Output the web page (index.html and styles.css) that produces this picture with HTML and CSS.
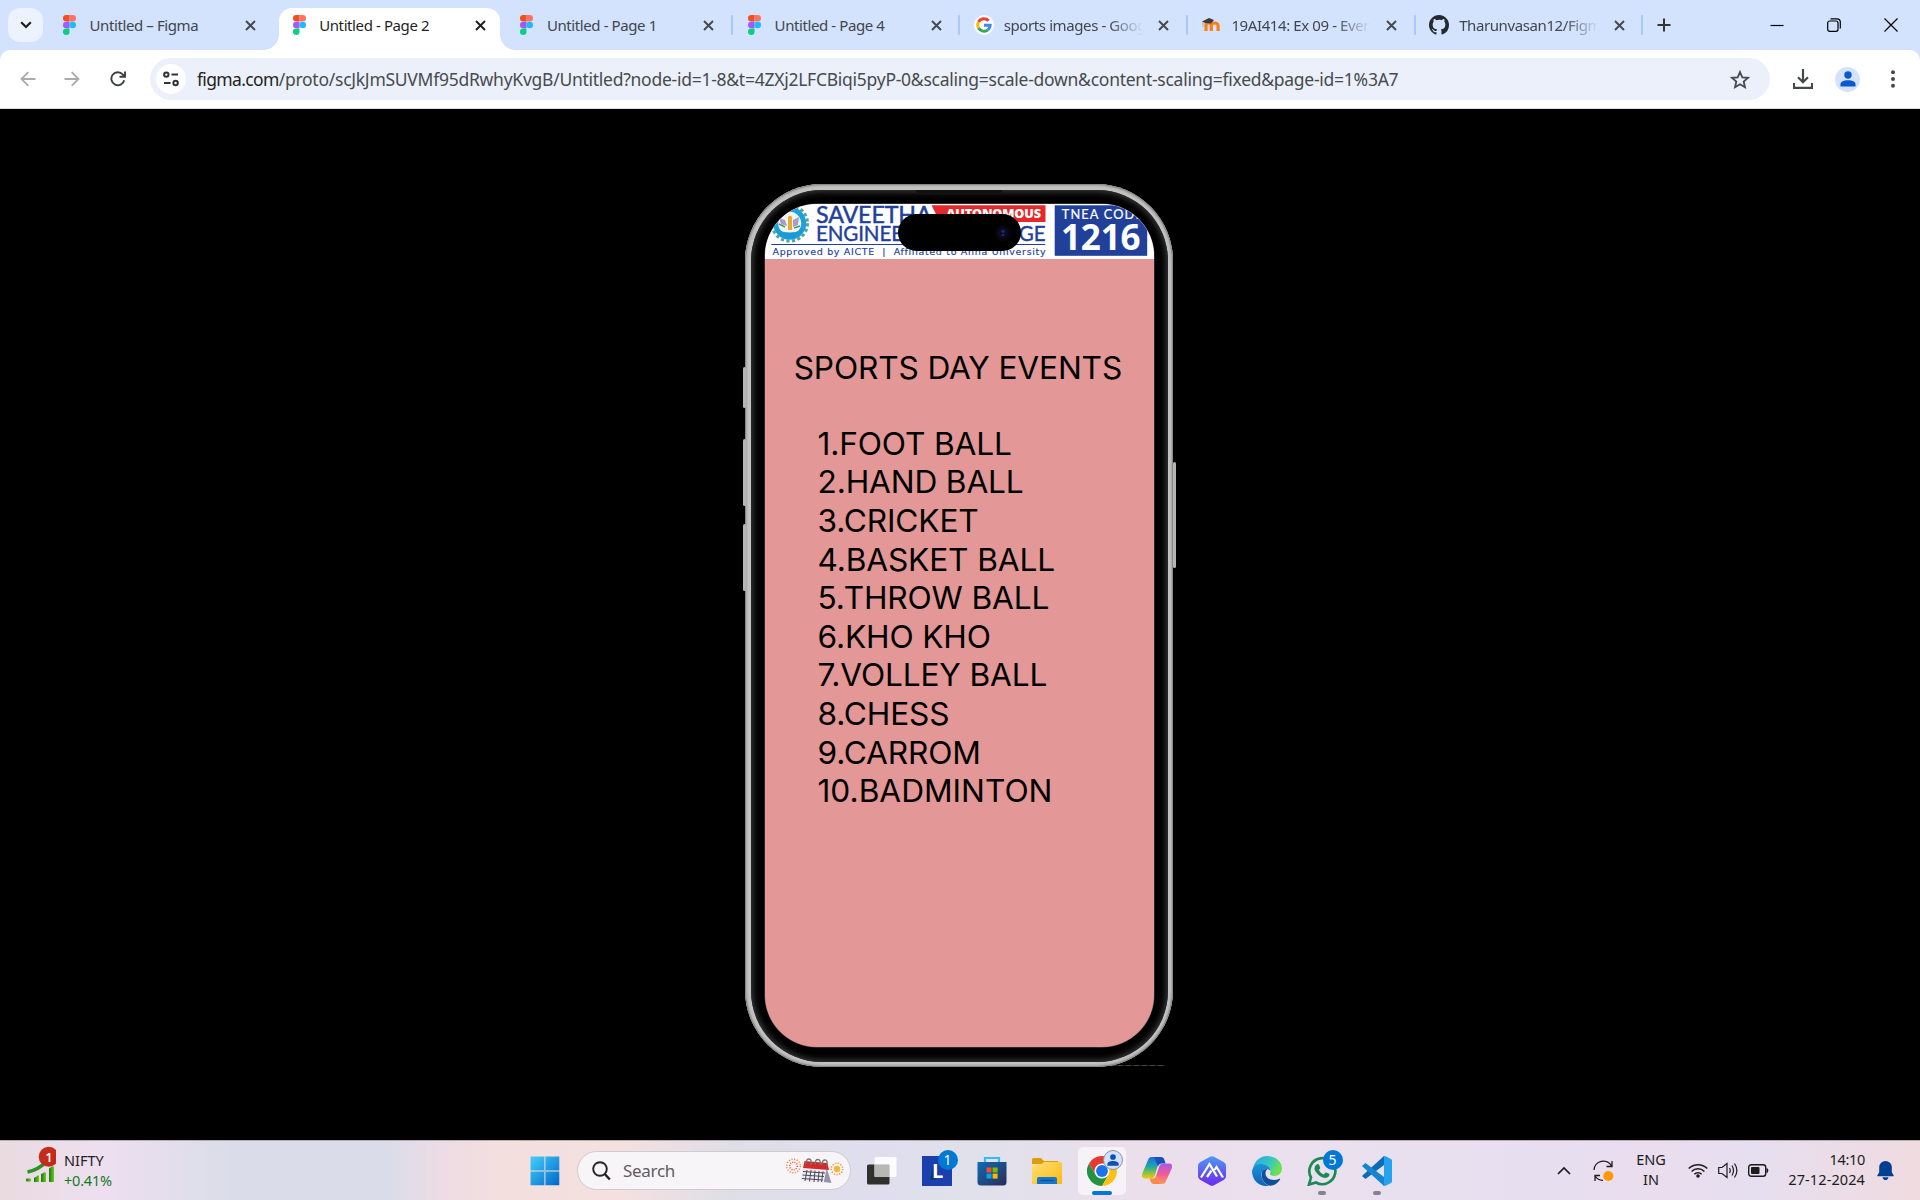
FILE: index.html
```html
<!DOCTYPE html>
<html lang="en">
<head>
<meta charset="utf-8">
<title>Untitled - Page 2</title>
<link rel="stylesheet" href="styles.css">
</head>
<body>
<svg width="0" height="0" class="defs">
  <defs>
    <symbol id="figma" viewBox="0 0 13 20"><path fill="#f24e1e" d="M6.5 0H3.3a3.3 3.3 0 0 0 0 6.6h3.2z"/><path fill="#ff7262" d="M6.5 0h3.2a3.3 3.3 0 0 1 0 6.6H6.5z"/><path fill="#a259ff" d="M6.5 6.7H3.3a3.3 3.3 0 0 0 0 6.6h3.2z"/><circle cx="9.7" cy="10" r="3.3" fill="#1abcfe"/><path fill="#0acf83" d="M6.5 13.4H3.3a3.3 3.3 0 1 0 3.2 3.3z"/></symbol>
    <symbol id="x" viewBox="0 0 11 11"><path d="M1 1l9 9M10 1l-9 9" stroke="currentColor" stroke-width="1.9" fill="none"/></symbol>
    <linearGradient id="win" x1="0" y1="0" x2="1" y2="1"><stop offset="0" stop-color="#46d0fb"/><stop offset="1" stop-color="#0067c8"/></linearGradient>
    <linearGradient id="fold" x1="0" y1="0" x2="1" y2="1"><stop offset="0" stop-color="#ffe079"/><stop offset="1" stop-color="#fbb90c"/></linearGradient>
    <linearGradient id="store" x1="0" y1="0" x2="1" y2="1"><stop offset="0" stop-color="#0f6cb8"/><stop offset="1" stop-color="#2a2c55"/></linearGradient>
    <linearGradient id="cpA" x1="0" y1="0" x2="0" y2="1"><stop offset="0" stop-color="#1672e0"/><stop offset=".45" stop-color="#22a6a6"/><stop offset=".75" stop-color="#8cc63c"/><stop offset="1" stop-color="#f2c813"/></linearGradient>
    <linearGradient id="cpB" x1="0" y1="0" x2="0" y2="1"><stop offset="0" stop-color="#a55bea"/><stop offset=".5" stop-color="#ee5a9c"/><stop offset="1" stop-color="#fb9a55"/></linearGradient>
    <linearGradient id="hex" x1="0" y1="0" x2="0" y2="1"><stop offset="0" stop-color="#4d9af0"/><stop offset="1" stop-color="#6d28f0"/></linearGradient>
    <linearGradient id="edgeA" x1="0" y1="0" x2="1" y2=".4"><stop offset="0" stop-color="#2aa4e6"/><stop offset=".6" stop-color="#35c6c4"/><stop offset="1" stop-color="#6fe04c"/></linearGradient>
    <linearGradient id="edgeB" x1="0" y1="0" x2="0" y2="1"><stop offset="0" stop-color="#1c93d8"/><stop offset="1" stop-color="#0c62b8"/></linearGradient>
    <linearGradient id="bars" x1="0" y1="0" x2="1" y2="0"><stop offset="0" stop-color="#117a1c"/><stop offset="1" stop-color="#74c916"/></linearGradient>
  </defs>
</svg>

<header class="tabstrip">
  <button class="tab-search"><svg width="12" height="8" viewBox="0 0 12 8"><path d="M1.2 1.2L6 6l4.800-4.800" fill="none" stroke="#1f1f1f" stroke-width="2.200"/></svg></button>
  <div class="tabs">
    <div class="tab first"><svg class="fav"><use href="#figma"/></svg><span class="title">Untitled – Figma</span><svg class="close"><use href="#x"/></svg></div>
    <div class="tab active"><svg class="fav"><use href="#figma"/></svg><span class="title">Untitled - Page 2</span><svg class="close"><use href="#x"/></svg></div>
    <div class="tab sep"><svg class="fav"><use href="#figma"/></svg><span class="title">Untitled - Page 1</span><svg class="close"><use href="#x"/></svg></div>
    <div class="tab sep"><svg class="fav"><use href="#figma"/></svg><span class="title">Untitled - Page 4</span><svg class="close"><use href="#x"/></svg></div>
    <div class="tab sep wide"><svg class="fav" viewBox="0 0 20 20"><circle cx="10" cy="10" r="10" fill="#fff"/><g fill="none" stroke-width="3"><path d="M14.600 5.800A6.300 6.300 0 0 0 4.500 7" stroke="#ea4335"/><path d="M4.500 7a6.300 6.300 0 0 0 0 6" stroke="#fbbc05"/><path d="M4.500 13a6.300 6.300 0 0 0 9.500 1.800" stroke="#34a853"/><path d="M14 14.800a6.300 6.300 0 0 0 2.200-4.600H10" stroke="#4285f4"/></g></svg><span class="title fade">sports images - Google</span><svg class="close"><use href="#x"/></svg></div>
    <div class="tab sep wide"><svg class="fav" viewBox="0 0 20 20"><path d="M5 16V10.500q0-2.500 2.600-2.500t2.700 2.500V16m0-5.500Q10.300 8 13.500 8t3.600 2.500V16" fill="none" stroke="#f98012" stroke-width="3.200"/><path d="M1 6.500L8 3l5 2-3 3.500-6-.5z" fill="#3b3b3b"/><path d="M2 7v5" stroke="#c8a48a"/></svg><span class="title fade">19AI414: Ex 09 - Event</span><svg class="close"><use href="#x"/></svg></div>
    <div class="tab sep wide"><svg class="fav" viewBox="0 0 16 16"><path fill="#24292f" d="M8 0C3.580 0 0 3.580 0 8c0 3.540 2.290 6.530 5.470 7.590.4.070.55-.17.55-.38 0-.19-.01-.82-.01-1.490-2.010.37-2.530-.49-2.690-.94-.09-.23-.48-.94-.82-1.130-.28-.15-.68-.52-.01-.53.63-.01 1.080.58 1.230.82.72 1.210 1.870.87 2.330.66.07-.52.28-.87.51-1.070-1.780-.2-3.640-.89-3.640-3.950 0-.87.31-1.590.82-2.150-.08-.2-.36-1.020.08-2.120 0 0 .67-.21 2.200.82A7.600 7.600 0 0 1 8 3.860c.68 0 1.360.09 2 .27 1.530-1.040 2.200-.82 2.200-.82.44 1.100.16 1.920.08 2.120.51.56.82 1.270.82 2.150 0 3.070-1.870 3.750-3.650 3.950.29.25.54.73.54 1.480 0 1.070-.01 1.930-.01 2.200 0 .21.15.46.55.38A8 8 0 0 0 16 8c0-4.420-3.580-8-8-8"/></svg><span class="title fade">Tharunvasan12/Figma</span><svg class="close"><use href="#x"/></svg></div>
  </div>
  <svg class="newtab" width="14" height="14" viewBox="0 0 14 14"><path d="M7 .5v13M.5 7h13" stroke="#333" stroke-width="2"/></svg>
  <div class="wincontrols">
    <svg width="14" height="14" viewBox="0 0 14 14"><path d="M.5 7.500h13" stroke="#000" stroke-width="1.200"/></svg>
    <svg width="14" height="14" viewBox="0 0 14 14" fill="none" stroke="#000" stroke-width="1.200"><rect x=".7" y="3" width="10.300" height="10.300" rx="2"/><path d="M3.500.800H10a3.300 3.300 0 0 1 3.300 3.300v6.500"/></svg>
    <svg width="14" height="14" viewBox="0 0 14 14"><path d="M.5.500l13 13m0-13l-13 13" stroke="#000" stroke-width="1.200"/></svg>
  </div>
</header>

<nav class="toolbar">
  <svg width="16" height="16" viewBox="0 0 16 16"><path d="M15.500 8H2M8.300 1.200L1.500 8l6.800 6.800" fill="none" stroke="#a9abaf" stroke-width="1.800"/></svg>
  <svg class="fwd" width="16" height="16" viewBox="0 0 16 16"><path d="M.5 8H14M7.700 1.200L14.500 8l-6.800 6.800" fill="none" stroke="#a9abaf" stroke-width="1.800"/></svg>
  <svg class="reload" width="16" height="16" viewBox="0 0 16 16"><path d="M14.200 9.200A6.500 6.500 0 1 1 12.800 3.500L15 5.800M15 .5v5.300H9.500" fill="none" stroke="#3c3f43" stroke-width="1.900"/></svg>
  <div class="omnibox">
    <span class="site"><svg width="16" height="16" viewBox="0 0 16 16" fill="none" stroke="#303338" stroke-width="2"><circle cx="3.300" cy="3.600" r="2.200"/><path d="M8.500 3.600H15M1 12h6.500"/><circle cx="12.600" cy="12" r="2.200"/></svg></span>
    <span class="url"><b>figma.com</b>/proto/scJkJmSUVMf95dRwhyKvgB/Untitled?node-id=1-8&amp;t=4ZXj2LFCBiqi5pyP-0&amp;scaling=scale-down&amp;content-scaling=fixed&amp;page-id=1%3A7</span>
    <svg class="star" width="20" height="19" viewBox="0 0 20 19"><path d="M10 2l2.300 5.300 5.700.5-4.300 3.800 1.300 5.600-5-3-5 3 1.300-5.600L2 7.800l5.700-.5z" fill="none" stroke="#45484d" stroke-width="1.800"/></svg>
  </div>
  <svg class="dl" width="20" height="20" viewBox="0 0 20 20"><path d="M10 0v13M5 8.200l5 5 5-5M1 14v4.800h18V14" fill="none" stroke="#45484d" stroke-width="2.200"/></svg>
  <span class="profile"><svg width="16" height="16" viewBox="0 0 16 16" fill="#0b57d0"><circle cx="8" cy="4" r="3.700"/><path d="M.5 15.500v-2.200C.5 10.500 4 9.300 8 9.300s7.500 1.200 7.500 4v2.200z"/></svg></span>
  <svg class="menu" width="4" height="18" viewBox="0 0 4 18" fill="#45484d"><circle cx="2" cy="2.200" r="2"/><circle cx="2" cy="9" r="2"/><circle cx="2" cy="15.800" r="2"/></svg>
</nav>

<main class="stage">
  <div class="phone">
    <i class="key k1"></i><i class="key k2"></i><i class="key k3"></i><i class="key k4"></i>
    <i class="speaker"></i><i class="glint"></i>
    <div class="screen">
      <svg class="banner" width="389" height="55" viewBox="0 0 389 55">
        <rect width="389" height="55" fill="#fff"/>
        <circle cx="24.700" cy="19.300" r="17.800" fill="none" stroke="#4fa79b" stroke-width="3" stroke-dasharray="3.200 2.390"/>
        <circle cx="24.700" cy="19.300" r="14" fill="#f3f4ee" stroke="#1ba1dc" stroke-width="5"/>
        <path d="M11 25q14 7 27 0v2q-5 8-13.500 8T11 27z" fill="#189bd8"/>
        <path d="M14 14l6 2 2 6-6-2zM28 16l6-3-1 8-5 2z" fill="#a99bd0"/><rect x="23" y="15" width="4" height="11" fill="#e8ac35"/><circle cx="25" cy="14" r="2.200" fill="#e8ac35"/><path d="M14 20l6 3M29 24l6-2" stroke="#3f9d76" stroke-width="1.500"/>
        <g fill="#233f9b" class="lato">
          <text x="51" y="18.700" font-size="24" stroke="#233f9b" stroke-width=".5" textLength="115.500" lengthAdjust="spacingAndGlyphs">SAVEETHA</text>
          <text x="51" y="37" font-size="21" stroke="#233f9b" stroke-width=".4" textLength="229.500" lengthAdjust="spacingAndGlyphs">ENGINEERING COLLEGE</text>
          <rect x="6.300" y="40" width="274" height="1"/>
          <text class="dv" x="7.500" y="50.700" font-size="9.500" textLength="273" lengthAdjust="spacing" stroke="#233f9b" stroke-width=".15" xml:space="preserve">Approved by AICTE  |  Affiliated to Anna University</text>
        </g>
        <path d="M166.500 1.300h114V18H175z" fill="#e5282b"/>
        <text class="os" x="181.300" y="14.300" font-size="12" font-weight="800" fill="#fff" textLength="94.500" lengthAdjust="spacingAndGlyphs">AUTONOMOUS</text>
        <rect x="289.700" y="1.300" width="92.500" height="50.500" fill="#20409a"/>
        <text class="lato" x="296.700" y="15.300" font-size="12.800" fill="#fff" stroke="#fff" stroke-width=".2" textLength="81" lengthAdjust="spacing">TNEA CODE</text>
        <text class="os" x="296" y="46" font-size="35" font-weight="700" fill="#fff" textLength="79.500" lengthAdjust="spacingAndGlyphs">1216</text>
      </svg>
      <div class="island"><svg width="16" height="16" viewBox="0 0 16 16"><circle cx="8" cy="8" r="8" fill="#07060d"/><circle cx="8" cy="8" r="5" fill="#0a0c26"/><circle cx="8" cy="6.300" r="1.500" fill="#1d2a70"/><circle cx="8" cy="10" r="1.300" fill="#1c2c66"/></svg></div>
      <h1>SPORTS DAY EVENTS</h1>
      <div class="events">
        <div>1.FOOT BALL</div><div>2.HAND BALL</div><div>3.CRICKET</div><div>4.BASKET BALL</div><div>5.THROW BALL</div><div>6.KHO KHO</div><div>7.VOLLEY BALL</div><div>8.CHESS</div><div>9.CARROM</div><div class="last">10.BADMINTON</div>
      </div>
    </div>
  </div>
</main>

<footer class="taskbar">
  <div class="widget">
    <svg width="30" height="40" viewBox="0 0 30 40"><path d="M1.500 27Q12 25 20 17" fill="none" stroke="#269522" stroke-width="3.600"/><g fill="url(#bars)"><rect x="0" y="33.500" width="5" height="3" rx="1"/><path d="M8 37v-4l4-2.500h1V37z"/><path d="M15 37v-8l3-1.500h2V37z"/><path d="M23 37V23.500l3-2h2V37z"/></g><circle cx="22.700" cy="11.700" r="10" fill="#c42b1c"/><text x="22.900" y="16.500" text-anchor="middle" font-size="13" font-weight="600" fill="#fff" class="os">1</text></svg>
    <div>NIFTY<br><span class="gain">+0.41%</span></div>
  </div>

  <div class="apps">
    <svg class="start" width="30" height="30" viewBox="0 0 30 30" fill="url(#win)"><path d="M.5.500h28.800v28.800H.5zM14.400.500v28.800h1V.5zM.5 14.400v1h28.800v-1z" fill-rule="evenodd"/></svg>
    <div class="search">
      <svg width="19" height="20" viewBox="0 0 19 20" fill="none" stroke="#222"><circle cx="8" cy="8" r="6.800" stroke-width="1.900"/><path d="M12.800 13l5 5.500" stroke-width="2.400"/></svg>
      <span class="ph">Search</span>
      <svg width="60" height="30" viewBox="0 0 60 30"><g fill="none" stroke="#f0913c" stroke-width="1.500"><circle cx="9.500" cy="10" r="6.800" stroke-dasharray="1.200 1.500"/><circle cx="9.500" cy="10" r="3.800" stroke="#ee5548" stroke-dasharray="1 1.300"/><circle cx="53" cy="13" r="5.700" stroke-dasharray="1.200 1.500"/></g><circle cx="53" cy="13" r="3.200" fill="#f7b633"/><path d="M42 10l5.500 17-8-1z" fill="#9894ad"/><path d="M19 11h24l-3.500 16-23-2z" fill="#efedf3"/><path d="M20.500 5l23 2 1.500 7-26-2z" fill="#d42a2a"/><path d="M19 15.500l22 1.500M18.500 19l21.500 1.500M18 22.500l21 1.500M23 14l-2 11M27 14l-1.500 11.500M31 14.500L30 26M35 15l-1 11M39 15.500L37.500 26" stroke="#4c4c57"/><path d="M22 8q0-5 3-5t2 6M31 8.500q0-5 3-5t2 6M38 9q0-5 3-5t2 6" fill="none" stroke="#777" stroke-width="1.300"/></svg>
    </div>
    <div class="cells">
      <div class="cell"><svg width="30" height="30" viewBox="0 0 30 30"><rect x="0" y="8.500" width="22.500" height="20" rx="1.500" fill="#30312e"/><rect x="7.500" y="1" width="22" height="20" rx="1.500" fill="#fff" opacity=".85"/><path d="M7.500 8.500h15V21h-15z" fill="#b7b7b5"/></svg></div>
      <div class="cell"><svg width="30" height="30" viewBox="0 0 30 30"><rect width="30" height="30" fill="#1c3fae"/><path d="M11 10L8 24h6z" fill="#123a60"/><text x="10" y="22.300" class="os" font-size="20" font-weight="700" fill="#fff">L</text></svg><b class="badge">1</b></div>
      <div class="cell"><svg width="30" height="30" viewBox="0 0 30 30"><path d="M8 7V2h14v5" fill="none" stroke="#30bdf2" stroke-width="2.200"/><path d="M.5 6h29v20a3.500 3.500 0 0 1-3.500 3.500H4A3.500 3.500 0 0 1 .5 26z" fill="url(#store)"/><path d="M9.500 11.500h5v5h-5z" fill="#f25022"/><path d="M15.600 11.500h5v5h-5z" fill="#7fba00"/><path d="M9.500 17.600h5v5h-5z" fill="#00a4ef"/><path d="M15.600 17.600h5v5h-5z" fill="#ffb900"/></svg></div>
      <div class="cell"><svg width="30" height="30" viewBox="0 0 30 30"><path d="M0 8V3.500Q0 2 1.500 2H9l3 3h14v4z" fill="#dd9c0b"/><path d="M0 8.500h9L12 6h16.500Q30 6 30 7.500V28H0z" fill="url(#fold)"/><path d="M5 28v-5q0-2 2-2h16q2 0 2 2v5z" fill="#1477c9"/><path d="M8.500 24.500h13" stroke="#0c4f92" stroke-width="1.300"/></svg></div>
      <div class="cell on"><svg width="30" height="30" viewBox="0 0 48 48"><circle cx="24" cy="24" r="12" fill="#fff"/><path d="M3.220 36A24 24 0 0 0 24 48l10.390-18A12 12 0 0 1 13.600 30.020L3.210 12A24 24 0 0 0 3.220 36" fill="#229342"/><path d="M24 48a24 24 0 0 0 20.780-36H24a12 12 0 0 1 10.390 18z" fill="#fbc116"/><path d="M24 12h20.780a24 24 0 0 0-41.570 0L13.610 30A12 12 0 0 1 24 12z" fill="#e33b2e"/><circle cx="24" cy="24" r="9.500" fill="#1a73e8"/></svg><span class="userbadge"><svg width="12" height="12" viewBox="0 0 16 16" fill="#0b4fb8"><circle cx="8" cy="4" r="3.800"/><path d="M.5 15.500v-2.200C.5 10.500 4 9.300 8 9.300s7.500 1.200 7.500 4v2.200z"/></svg></span></div>
      <div class="cell"><svg width="30" height="30" viewBox="0 0 30 30"><path d="M6 4q1-3 3.500-3H19l-3 8-3 10q-1 3.500-4 3.500H3q-4 0-2.700-5z" fill="url(#cpA)"/><path d="M12 1h7q2.500 0 3.500 3l1 3.500h-4q-2.500 0-3.500 3z" fill="#1b4fc0"/><path d="M24 25q-1 3-3.500 3H12l-2-1 4-7 3-9q1-3.500 4-3.500h6q4 0 2.700 5z" fill="url(#cpB)"/><path d="M18 28h-6q-2.500 0-3.500-3l-.8-2.500H11q2.500 0 3.500-3z" fill="#fb8a48"/></svg></div>
      <div class="cell"><svg width="30" height="30" viewBox="0 0 30 30"><path d="M13 .7q2-1 4 0l10 5.600q2 1 2 3.500v10.400q0 2.500-2 3.500l-10 5.600q-2 1-4 0L3 23.700q-2-1-2-3.500V9.800q0-2.500 2-3.500z" fill="url(#hex)"/><path d="M4 21.500L12.500 8 20 20.500M10 21l4.500-6.500M17.500 14l2-3L26 21.500" fill="none" stroke="#fff" stroke-width="2.200"/></svg></div>
      <div class="cell"><svg width="30" height="30" viewBox="0 0 30 30"><path d="M1 12C3 4 9 0 15 0c9 0 15 6 15 12.500 0 4.500-3.500 7.500-7.500 7.500-5 0-5-2.500-4-4.500 0-5-5-7.500-9-7-4 .3-7 2-8.500 3.500z" fill="url(#edgeA)"/><path d="M0 15C1 10 5 7.500 10 8c5 .4 8.500 3.500 8.500 7-.5-1-2-2-4-2-3 0-5.500 3-5 7 .6 5 4 8.500 8 9.800C7 31.500 0 24 0 15z" fill="url(#edgeB)"/><path d="M10.500 15c-2.500 6 1 13 7.500 14.800 4 0 8-3 10-6 .5-1-.3-1.200-1-.8-5.500 2.500-13.500.5-13.500-6 0-2 1-3.300 2-4-2 0-4 .5-5 2z" fill="#0d4f98"/></svg></div>
      <div class="cell run"><svg width="30" height="30" viewBox="0 0 30 30"><path d="M2 28.500l2-7A13 13 0 1 1 9 26.500z" fill="none" stroke="#1d8a55" stroke-width="2.700"/><path d="M9.500 8.500q1.500-1 2.500.2l1.300 3q0 1-1.500 2.300 1.500 3 4.800 4.500l1.900-2q1-.5 4 1.500 0 3.500-4 4-4 0-7.700-3.800T7.500 12.500q0-2.500 2-4z" fill="#1d8a55"/></svg><b class="badge">5</b></div>
      <div class="cell run"><svg width="30" height="30" viewBox="0 0 30 30"><path d="M22 0v9L3.500 23 .5 20.500Q0 20 .5 19.500z" fill="#0b6cb5"/><path d="M.5 9.500L3.500 7 22 21v9L.5 10.500Q0 10 .5 9.500z" fill="#1684cf"/><path d="M21 .3L23 0l6 3q1 .5 1 1.500v21q0 1-1 1.500l-6 3-2-.5 1-.8V1z" fill="#26a3ee"/></svg></div>
    </div>
  </div>

  <div class="tray">
    <svg width="14" height="9" viewBox="0 0 14 9"><path d="M1 8l6-6 6 6" fill="none" stroke="#1c1c1c" stroke-width="1.700"/></svg>
    <svg class="sync" width="22" height="22" viewBox="0 0 22 22" fill="none" stroke="#1c1c1c" stroke-width="1.300"><path d="M1 10A9.300 9.300 0 0 1 18.500 6M19 1v5.500h-5.500M7 15.500H2V21M2 16q3 4.500 8 4.300"/><circle cx="15.300" cy="16" r="5" fill="#ff9807" stroke="none"/></svg>
    <div class="lang">ENG<br>IN</div>
    <svg class="wifi" width="20" height="15" viewBox="0 0 20 15" fill="none" stroke="#1c1c1c" stroke-width="1.500"><path d="M.7 5.500a13.200 13.200 0 0 1 18.600 0M3.600 8.500a9 9 0 0 1 12.800 0M6.300 11.200a5.200 5.200 0 0 1 7.400 0"/><circle cx="10" cy="13" r="1.800" fill="#1c1c1c" stroke="none"/></svg>
    <svg class="vol" width="20" height="17" viewBox="0 0 20 17" fill="none" stroke="#1c1c1c" stroke-width="1.200"><path d="M.7 5.500v6H4l5 4V1.500l-5 4zM11.500 6q1.500 2.500 0 5M14 3.500q3 5 0 10M16.500 1.500q4.800 7 0 14"/></svg>
    <svg class="bat" width="21" height="13" viewBox="0 0 21 13"><rect x=".7" y=".7" width="17" height="11.600" rx="2.500" fill="none" stroke="#1c1c1c" stroke-width="1.400"/><rect x="3" y="3" width="8.500" height="7" rx="1" fill="#1c1c1c"/><path d="M18.500 4q1.800 0 1.800 2.500T18.500 9z" fill="#1c1c1c"/></svg>
    <div class="clock"><span class="time">14:10</span><br><span class="date">27-12-2024</span></div>
    <svg class="bell" width="17" height="19" viewBox="0 0 17 19" fill="#003e92"><path d="M8.500 0a6.300 6.300 0 0 1 6.300 6.300v5l1.900 3.200v.8H.3v-.8l1.900-3.200v-5A6.300 6.300 0 0 1 8.500 0zM5.500 16.200h6Q11 19 8.500 19t-3-2.800z"/></svg>
  </div>
</footer>
</body>
</html>
```
FILE: styles.css
```css
* { box-sizing: border-box; }
body { margin: 0; width: 1920px; height: 1200px; overflow: hidden; background: #000; font-family: "Noto Sans", "Open Sans", sans-serif; display: flex; flex-direction: column; }
svg { display: block; flex: none; }
.defs { position: absolute; }
.lato { font-family: Lato, sans-serif; }
.os { font-family: "Open Sans", sans-serif; }
.dv { font-family: "DejaVu Sans", sans-serif; }

.tabstrip { height: 50px; flex: none; background: #d3e2fd; display: flex; align-items: center; padding: 0 22px 0 8px; }
.tab-search { width: 35px; height: 34px; border: 0; border-radius: 12px; background: #ecf2fe; display: grid; place-items: center; padding: 0; }
.tabs { display: flex; height: 50px; margin-left: 6px; }
.tab { position: relative; width: 227.700px; display: flex; align-items: center; padding: 0 18px 0 16px; color: #41464d; font-size: 15px; }
.tab.first { padding: 0 20.500px 0 14px; }
.tab .fav { width: 13px; height: 20px; margin-right: 13.500px; }
.tab.wide .fav { width: 20px; height: 20px; margin-right: 10px; margin-left: -2px; }
.title { flex: 1; white-space: nowrap; overflow: hidden; letter-spacing: -.4px; padding-right: 4px; }
.fade { flex: none; width: 139px; -webkit-mask-image: linear-gradient(90deg, #000 105px, transparent 139px); mask-image: linear-gradient(90deg, #000 105px, transparent 139px); }
.close { width: 11px; height: 11px; margin-left: auto; color: #45484d; }
.tab.active { color: #1f1f1f; }
.tab.active .close { color: #1f1f1f; }
.tab.active > * { position: relative; z-index: 1; }
.tab.active::before { content: ""; position: absolute; left: 2px; right: 4px; top: 8px; bottom: 0; background: #fff; border-radius: 13px 13px 0 0; }
.tab.active::after { content: ""; position: absolute; left: -13px; right: -11px; bottom: 0; height: 15px; background: radial-gradient(circle at 0 0, transparent 14.500px, #fff 15px) 0 0/15px 15px no-repeat, radial-gradient(circle at 100% 0, transparent 14.500px, #fff 15px) 100% 0/15px 15px no-repeat; }
.tab.sep::after { content: ""; position: absolute; right: -.5px; top: 15px; width: 2px; height: 20px; background: #a8c7fa; border-radius: 1px; }
.newtab { margin-left: 14px; }
.wincontrols { margin-left: auto; display: flex; gap: 43px; }

.toolbar { height: 59px; flex: none; background: #fff; border-bottom: 1px solid #d9dce1; display: flex; align-items: center; padding: 0 25px 0 20px; border-radius: 10px 10px 0 0; position: relative; }
.toolbar::before { content: ""; position: absolute; inset: 0 0 30px; background: #d3e2fd; z-index: -1; }
.fwd { margin-left: 28px; }
.reload { margin-left: 29.500px; }
.omnibox { margin-left: 24.500px; width: 1620px; height: 42px; border-radius: 21px; background: #ebf0fa; display: flex; align-items: center; padding: 0 20px 0 6px; }
.site { width: 30px; height: 30px; border-radius: 50%; background: #fff; display: grid; place-items: center; }
.url { margin-left: 11px; font-size: 17.500px; color: #474a4f; white-space: nowrap; letter-spacing: -.26px; }
.url b { font-weight: 400; color: #1f1f1f; letter-spacing: -.65px; }
.star { margin-left: auto; }
.dl { margin-left: 22.500px; }
.profile { margin-left: 22.500px; width: 25px; height: 25px; border-radius: 50%; background: #d3e2fd; display: grid; place-items: center; }
.menu { margin-left: auto; }

.stage { flex: 1; display: flex; justify-content: center; align-items: flex-start; padding: 75px 1px 0 0; isolation: isolate; background: #000; }
.phone { position: relative; width: 428px; height: 883px; border-radius: 77px; padding: 20px 20px 20px 20px; margin-right: 1px; background: #c2c2c2; box-shadow: inset 0 0 0 1px #8a8a88, inset 0 0 2px 2px #a5a5a3; }
.phone::before { content: ""; position: absolute; inset: 5.500px; border-radius: 71px; background: #000; box-shadow: inset 0 0 6px 2px #3b3b3b; }
.key { position: absolute; width: 3px; background: #b5b5b3; border-radius: 2px; }
.k1 { left: -2px; top: 183px; height: 41px; }
.k2 { left: -2px; top: 255px; height: 67px; }
.k3 { left: -2px; top: 340px; height: 67px; }
.k4 { right: -3px; top: 278px; height: 106px; }
.speaker { position: absolute; left: 171px; top: 6px; width: 86px; height: 3px; background: #101010; border-radius: 0 0 3px 3px; }
.glint { position: absolute; left: 365px; bottom: 1px; width: 55px; height: 1px; background: repeating-linear-gradient(90deg, #444 0 5px, #222 5px 8px); z-index: -1; }
.screen { position: relative; width: 388.500px; height: 843px; border-radius: 52px; overflow: hidden; background: #e39796; font-family: Inter, sans-serif; font-size: 31.650px; letter-spacing: -.14px; color: #000; box-shadow: 0 0 0 .5px #555; }
.island { position: absolute; left: 133px; top: 10px; width: 123px; height: 37px; border-radius: 19px; background: #000; display: flex; align-items: center; justify-content: flex-end; padding-right: 10px; }
h1 { margin: 90px 0 0 28.700px; font: inherit; line-height: 38.600px; white-space: nowrap; }
.events { margin: 37.300px 0 0 52.500px; line-height: 38.600px; }
.last { letter-spacing: 0; }

.taskbar { height: 60px; flex: none; display: flex; position: relative; border-top: 1px solid #b9abb3; background: linear-gradient(90deg, #e9dbdf 0, #eedff0 100px, #dadde9 230px, #dadde9 390px, #eddce4 440px, #f4dfdf 500px, #f5e0e0 620px, #dedfe6 730px, #e0deee 880px, #e0e1ea 970px, #ecdfec 1150px, #e9e0ef 1400px, #e7dff0 1560px, #eaddee 1650px, #e6dff0 1750px, #f0dbe0 1920px); }
.widget { width: 504px; display: flex; align-items: center; padding: 0 0 2px 26px; font-size: 14.500px; line-height: 20px; color: #222; gap: 8px; }
.widget svg { margin-top: -9px; }
.gain { color: #117a1c; letter-spacing: -.2px; }
.apps { display: flex; align-items: center; }
.start { margin-left: 25.500px; }
.search { margin-left: 17px; width: 274px; height: 39px; border-radius: 20px; border: 1px solid #d3c9d0; background: #f8f5f8; display: flex; align-items: center; padding: 0 6px 0 14px; }
.ph { margin-left: 12.500px; font-size: 17px; letter-spacing: -.3px; color: #5f5c60; margin-right: auto; }
.cells { display: flex; gap: 7px; margin-left: 7px; }
.cell { position: relative; width: 48px; height: 48px; display: grid; place-items: center; border-radius: 5px; }
.cell.on { background: #f7f2f8; }
.cell.on::after { content: ""; position: absolute; left: 14px; bottom: 0; width: 20px; height: 4px; border-radius: 2px; background: #0078d4; }
.cell.run::after { content: ""; position: absolute; left: 20px; bottom: 0; width: 8px; height: 4px; border-radius: 2px; background: #86818a; }
.badge { position: absolute; left: 25px; top: 3px; width: 20px; height: 20px; border-radius: 50%; background: #0078d4; color: #fff; font-size: 14px; font-weight: 400; line-height: 20px; text-align: center; }
.userbadge { position: absolute; left: 25px; top: 3px; width: 20px; height: 20px; border-radius: 50%; background: #d3e2fd; border: 1px solid #8c939c; display: grid; place-items: center; }
.tray { margin-left: auto; display: flex; align-items: center; padding-right: 26px; font-size: 14.500px; line-height: 20px; color: #1c1c1c; }
.sync { margin-left: 22px; }
.lang { width: 40px; text-align: center; margin: -3px 0 0 16px; }
.wifi { margin-left: 17px; }
.vol { margin-left: 10px; }
.bat { margin-left: 10px; }
.clock { width: 96px; text-align: right; margin-top: -3px; }
.time { letter-spacing: -.3px; }
.date { letter-spacing: .1px; }
.bell { margin-left: 12px; }
```
